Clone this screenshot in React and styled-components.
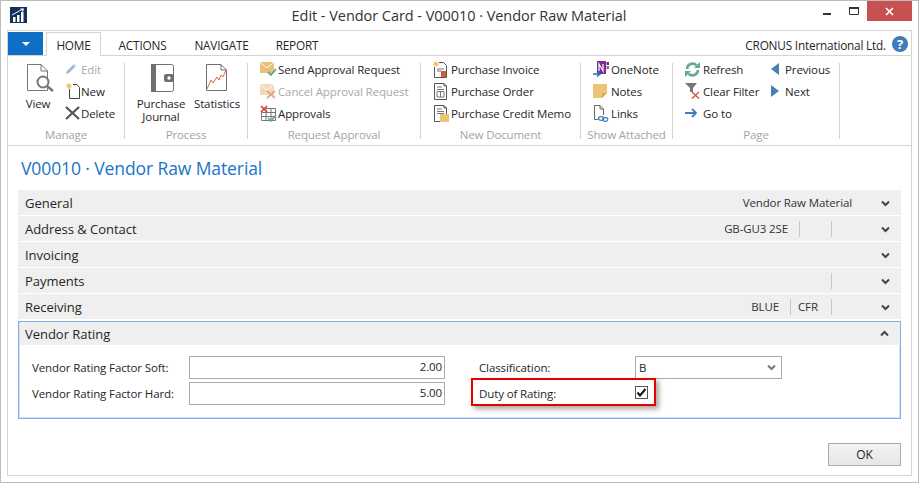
import React from 'react'
import styled, { createGlobalStyle } from 'styled-components'

const GlobalStyle = createGlobalStyle`
  html, body { margin: 0; padding: 0; background: #fff; }
  body {
    font-family: "Open Sans", "Noto Sans", sans-serif;
    font-size: 11.5px;
    letter-spacing: -0.12px;
    color: #262626;
  }
  * { box-sizing: border-box; }
`

const Win = styled.div`
  width: 919px;
  height: 483px;
  border: 1px solid #bdbdbd;
  background: #fff;
  display: flex;
  flex-direction: column;
  overflow: hidden;
`

const TitleBar = styled.div`
  height: 29px;
  flex: none;
  display: flex;
  align-items: flex-start;
`

const AppLogo = styled.svg`
  margin: 6px 0 0 9px;
  flex: none;
`

const WinTitle = styled.div`
  flex: 1;
  text-align: center;
  font-size: 14.5px;
  line-height: 30px;
  letter-spacing: -0.05px;
  padding-left: 68px;
  color: #333;
`

const WinControls = styled.div`
  display: flex;
  align-items: flex-start;
  margin-right: 6px;
`

const CtrlBtn = styled.div`
  width: ${({ $w }) => $w}px;
  height: 20px;
  display: flex;
  align-items: ${({ $low }) => ($low ? 'flex-end' : 'center')};
  justify-content: center;
  padding-bottom: ${({ $low }) => ($low ? '6px' : '0')};
  background: ${({ $close }) => ($close ? '#c75050' : 'transparent')};
`

const Frame = styled.div`
  flex: 1;
  margin: 0 6px 6px 6px;
  border: 1px solid #d4d4d4;
  display: flex;
  flex-direction: column;
  min-height: 0;
`

const TabRow = styled.div`
  height: 24px;
  flex: none;
  padding-top: 1px;
  display: flex;
  align-items: stretch;
`

const AppMenu = styled.div`
  width: 35px;
  background: #0f6fc6;
  display: flex;
  align-items: center;
  justify-content: center;
  margin-right: 3px;
`

const Caret = styled.span`
  width: 0;
  height: 0;
  border-left: 4px solid transparent;
  border-right: 4px solid transparent;
  border-top: 4px solid #fff;
`

const Tab = styled.div`
  height: ${({ $active }) => ($active ? '24px' : '23px')};
  width: ${({ $w }) => $w}px;
  display: flex;
  align-items: center;
  justify-content: center;
  padding-top: 1px;
  font-size: 11.8px;
  letter-spacing: -0.2px;
  position: relative;
  z-index: 1;
  background: #fff;
  border: 1px solid ${({ $active }) => ($active ? '#d4d4d4' : 'transparent')};
  border-bottom: none;
`

const Company = styled.div`
  margin-left: auto;
  display: flex;
  align-items: center;
  gap: 6px;
  padding: 2px 3px 0 0;
  font-size: 11.8px;
  letter-spacing: -0.2px;
`

const HelpIcon = styled.span`
  width: 16px;
  height: 16px;
  margin-top: -2px;
  border-radius: 50%;
  background: #3f7cb8;
  color: #fff;
  font-weight: 700;
  font-size: 13px;
  line-height: 16px;
  text-align: center;
`

const Ribbon = styled.div`
  height: 91px;
  flex: none;
  border-top: 1px solid #d4d4d4;
  border-bottom: 1px solid #d4d4d4;
  padding-top: 7px;
  display: flex;
  align-items: flex-start;
`

const Group = styled.div`
  width: ${({ $w }) => $w}px;
  height: 76px;
  flex: none;
  border-right: 1px solid #d4d4d4;
  display: flex;
  flex-direction: column;
  align-items: stretch;
`

const GroupBody = styled.div`
  flex: 1;
  min-height: 0;
  display: flex;
  align-items: flex-start;
  padding-left: ${({ $pad }) => $pad}px;
  gap: ${({ $gap }) => $gap || 0}px;
`

const GroupLabel = styled.div`
  height: 11px;
  line-height: 13px;
  text-align: center;
  color: #a3a3a3;
  white-space: nowrap;
`

const ItemStack = styled.div`
  display: flex;
  flex-direction: column;
  margin-top: -5px;
  width: ${({ $w }) => ($w ? `${$w}px` : 'auto')};
`

const SmallItem = styled.div`
  height: 22px;
  display: flex;
  align-items: center;
  white-space: nowrap;
  color: ${({ $off }) => ($off ? '#a9a9a9' : 'inherit')};
`

const IconSlot = styled.span`
  width: ${({ $w }) => $w}px;
  height: 18px;
  flex: none;
  display: flex;
  align-items: center;
`

const LargeItem = styled.div`
  width: ${({ $w }) => $w}px;
  flex: none;
  display: flex;
  flex-direction: column;
  align-items: center;
  text-align: center;
  line-height: 13px;
  padding-top: 1px;
`

const LargeIcon = styled.div`
  height: 28px;
  margin-bottom: 5px;
  padding-left: ${({ $nudge }) => $nudge || 0}px;
  display: flex;
  align-items: center;
`

const Content = styled.div`
  flex: 1;
  padding: 0 10px 9px 10px;
  display: flex;
  flex-direction: column;
  min-height: 0;
`

const PageTitle = styled.h1`
  margin: 0;
  height: 44px;
  font-size: 17.5px;
  font-weight: 400;
  line-height: 44px;
  letter-spacing: -0.1px;
  padding-left: 3px;
  color: #1a74c8;
`

const FastTabRow = styled.div`
  height: 25px;
  flex: none;
  margin-bottom: 1px;
  background: #efefef;
  display: flex;
  align-items: center;
  padding: 1px 0 0 7px;
  font-size: 13px;
  letter-spacing: -0.03px;
`

const FastTabName = styled.span`
  flex: 1;
`

const Summary = styled.div`
  display: flex;
  height: 100%;
  align-items: center;
  font-size: 11.5px;
  letter-spacing: -0.12px;
  color: #333;
`

const SummaryCell = styled.div`
  width: ${({ $w }) => ($w ? `${$w}px` : 'auto')};
  height: 16px;
  line-height: 15px;
  text-align: ${({ $left }) => ($left ? 'left' : 'right')};
  padding-left: ${({ $left }) => ($left ? '7px' : '0')};
  padding-right: ${({ $left, $flush }) => ($left || $flush ? '0' : '11px')};
  border-right: ${({ $div }) => ($div ? '1px solid #c8c8c8' : 'none')};
`

const ChevronSlot = styled.div`
  width: 49px;
  padding-left: 29px;
  flex: none;
  display: flex;
  align-items: center;
`

const ActivePanel = styled.div`
  margin-top: 1px;
  height: 98px;
  flex: none;
  border: 1px solid #82aeea;
  box-shadow: inset 1px 1px 0 #d3e2f8, inset -1px -1px 0 #d3e2f8;
  position: relative;
`

const PanelHeader = styled(FastTabRow)`
  height: 23px;
  margin: 0 0 0 1px;
  padding: 0 0 0 5px;
`

const FormGrid = styled.div`
  display: flex;
  padding: 11px 0 0 13px;
`

const FormCol = styled.div`
  width: ${({ $w }) => $w}px;
  flex: none;
  display: flex;
  flex-direction: column;
  gap: 3px;
`

const FieldRow = styled.div`
  height: 23px;
  display: flex;
  align-items: center;
`

const FieldLabel = styled.label`
  width: ${({ $w }) => $w}px;
  flex: none;
  white-space: nowrap;
`

const NumInput = styled.div`
  width: 256px;
  height: 23px;
  border: 1px solid #ababab;
  text-align: right;
  padding-right: 2px;
  line-height: 20px;
`

const SelectBox = styled.div`
  width: 147px;
  height: 23px;
  border: 1px solid #ababab;
  display: flex;
  align-items: center;
  justify-content: space-between;
  padding: 0 5px 0 3px;
`

const Check = styled.span`
  width: 13px;
  height: 13px;
  margin-bottom: 2px;
  border: 1px solid #555;
  background: #fff;
  display: flex;
  align-items: center;
  justify-content: center;
`

const Highlight = styled.div`
  position: absolute;
  left: 452px;
  top: 56px;
  width: 185px;
  height: 28px;
  border: 2px solid #e60000;
  box-shadow: 3px 3px 5px rgba(80, 80, 60, 0.5);
  pointer-events: none;
`

const Footer = styled.div`
  flex: 1;
  display: flex;
  align-items: flex-end;
  justify-content: flex-end;
`

const OkButton = styled.button`
  width: 73px;
  height: 23px;
  background: linear-gradient(#f3f3f3, #e6e6e6);
  border: 1px solid #adadad;
  font: inherit;
  font-size: 12px;
  color: #262626;
  padding: 0;
`

/* icons */
const PageOutline = ({ x = 0, y = 0, w, h, fold = 5, color = '#555', sw = 1 }) => (
  <path
    d={`M${x + 0.5} ${y + 0.5}H${x + w - fold}L${x + w - 0.5} ${y + fold}V${y + h - 0.5}H${x + 0.5}Z M${x + w - fold} ${y + 0.5}V${y + fold}H${x + w - 0.5}`}
    fill="none"
    stroke={color}
    strokeWidth={sw}
  />
)

const Logo = () => (
  <AppLogo width="17" height="16" viewBox="0 0 17 16">
    <rect width="17" height="16" fill="#12305c" />
    <rect x="3" y="10" width="2.5" height="5" fill="#fff" />
    <rect x="7" y="8" width="2.5" height="7" fill="#fff" />
    <rect x="11" y="5" width="2.5" height="10" fill="#fff" />
    <path d="M2 8L11 3" stroke="#fff" strokeWidth="1" fill="none" />
    <path d="M10 1.5L14 1.5L13 5Z" fill="#fff" />
  </AppLogo>
)

const ViewIcon = () => (
  <svg width="28" height="28" viewBox="0 0 28 28">
    <PageOutline w={21} h={27} fold={7} color="#777" />
    <circle cx="16" cy="18" r="5.5" fill="#fff" stroke="#777" strokeWidth="2" />
    <path d="M20 22L26 27" stroke="#777" strokeWidth="2.4" />
  </svg>
)

const JournalIcon = () => (
  <svg width="24" height="28" viewBox="0 0 24 28">
    <rect x="0.5" y="0.5" width="22" height="27" rx="2" fill="#fff" stroke="#707070" />
    <rect x="0" y="0" width="5" height="28" fill="#707070" />
    <rect x="13" y="10" width="10" height="8" rx="2" fill="#707070" />
    <circle cx="18" cy="14" r="1.7" fill="#fff" />
  </svg>
)

const StatsIcon = () => (
  <svg width="22" height="28" viewBox="0 0 22 28">
    <PageOutline w={21} h={27} fold={6} color="#707070" />
    <path d="M1 25L5 16L7 19L11 13L13 16L15 11L17 13L20 6" fill="none" stroke="#d9694a" strokeWidth="1" />
  </svg>
)

const PencilIcon = () => (
  <svg width="12" height="12" viewBox="0 0 12 12">
    <path d="M1 11L2 8L8 2L10 4L4 10Z" fill="#9db8d2" />
    <path d="M9 1L11 3L10 4L8 2Z" fill="#b9cadb" />
  </svg>
)

const NewIcon = () => (
  <svg width="15" height="16" viewBox="0 0 15 16">
    <path d="M4.5 6V15.5H14.5V4.5L12 1.5H8" fill="none" stroke="#444" />
    <path d="M4 0V6M1 3H7M2 1L6 5M6 1L2 5" stroke="#f0b94e" strokeWidth="1" />
  </svg>
)

const XIcon = () => (
  <svg width="15" height="14" viewBox="0 0 15 14">
    <path d="M1 1L14 13M14 1L1 13" stroke="#555" strokeWidth="2.2" />
  </svg>
)

const MailIcon = ({ off }) => (
  <svg width="17" height="16" viewBox="0 0 17 16" opacity={off ? 0.55 : 1}>
    <rect x="0" y="1" width="14" height="11" fill="#eabf78" />
    <path d="M0 1L7 7L14 1" fill="none" stroke="#fff" strokeWidth="1" />
    {off ? (
      <path d="M7 8L15 15M15 8L7 15" stroke="#d9573f" strokeWidth="1.8" />
    ) : (
      <path d="M8 11L11 14L16 8" fill="none" stroke="#5fa38a" strokeWidth="1.8" />
    )}
  </svg>
)

const ApprovalsIcon = () => (
  <svg width="17" height="17" viewBox="0 0 17 17">
    <path d="M6 3.5H15.5V15.5H1.5V8M1.5 11.5H15.5M6 3.5V15.5M11 3.5V15.5M1.5 7.5H15.5" fill="none" stroke="#777" />
    <path d="M1 1L7 7M7 1L1 7" stroke="#d33f2a" strokeWidth="1.7" />
    <path d="M8 13L11 16L16 10" fill="none" stroke="#5fa38a" strokeWidth="1.6" />
  </svg>
)

const InvoiceIcon = () => (
  <svg width="15" height="17" viewBox="0 0 15 17">
    <path d="M6 1.5H10.5L13.5 4.5V16.5H1.5V6" fill="none" stroke="#555" />
    <path d="M3 0V6M0 3H6M1 1L5 5M5 1L1 5" stroke="#f0b94e" />
    <path d="M4 8H11M4 10H8" stroke="#777" />
    <rect x="8" y="10" width="5" height="6" fill="#d9573f" />
  </svg>
)

const OrderIcon = () => (
  <svg width="15" height="17" viewBox="0 0 15 17">
    <PageOutline x={1} w={13} h={17} fold={3} color="#555" />
    <path d="M4 4H9M4 6.5H11M4 8.5H11V14H4ZM7.5 8.5V14" fill="none" stroke="#777" />
  </svg>
)

const MemoIcon = () => (
  <svg width="16" height="17" viewBox="0 0 16 17">
    <PageOutline x={1} w={13} h={17} fold={3} color="#555" />
    <path d="M4 4H9M4 6.5H11M4 8.5H11" stroke="#777" />
    <rect x="7" y="9" width="9" height="8" fill="#eec477" />
  </svg>
)

const OneNoteIcon = () => (
  <svg width="17" height="17" viewBox="0 0 17 17">
    <rect x="4" y="0" width="9" height="13" fill="#7b2c8f" />
    <rect x="13.5" y="1" width="2.5" height="3" fill="#7b2c8f" />
    <rect x="13.5" y="5" width="2.5" height="3" fill="#a05cb2" />
    <path d="M6 10V3L10 10V3" fill="none" stroke="#fff" strokeWidth="1.2" />
    <path d="M0 13H6M4 10.5L7 13L4 15.5" fill="none" stroke="#2f6fb3" strokeWidth="1.6" />
  </svg>
)

const NotesIcon = () => (
  <svg width="15" height="14" viewBox="0 0 15 14">
    <path d="M0 0H14V9L9 14H0Z" fill="#eec477" />
    <path d="M9 14V9H14Z" fill="#d9a95a" />
  </svg>
)

const LinksIcon = () => (
  <svg width="16" height="17" viewBox="0 0 16 17">
    <path d="M1.5 12V.5H7L10.5 4V10M7 .5V4H10.5M1.5 12V14.5H5" fill="none" stroke="#666" />
    <ellipse cx="8.2" cy="13.5" rx="2.6" ry="1.8" fill="none" stroke="#3f7cb8" strokeWidth="1.2" />
    <ellipse cx="12.2" cy="14.5" rx="2.6" ry="1.8" fill="none" stroke="#3f7cb8" strokeWidth="1.2" />
  </svg>
)

const RefreshIcon = () => (
  <svg width="15" height="15" viewBox="0 0 15 15">
    <path d="M2 7A5.5 5.5 0 0 1 11.5 3.4" fill="none" stroke="#66a892" strokeWidth="2.6" />
    <path d="M9 6H15V0Z" fill="#66a892" />
    <path d="M13 8A5.5 5.5 0 0 1 3.5 11.6" fill="none" stroke="#66a892" strokeWidth="2.6" />
    <path d="M6 9H0V15Z" fill="#66a892" />
  </svg>
)

const FilterIcon = () => (
  <svg width="16" height="16" viewBox="0 0 16 16">
    <path d="M0 0H12L8 5V9H5V5Z" fill="#777" />
    <path d="M7 9L14 15.5M14 9L7 15.5" stroke="#d9573f" strokeWidth="1.4" />
  </svg>
)

const GoToIcon = () => (
  <svg width="12" height="10" viewBox="0 0 12 10">
    <path d="M0 5H10M7 1L11 5L7 9" fill="none" stroke="#3f7cb8" strokeWidth="1.8" />
  </svg>
)

const TriangleIcon = ({ left }) => (
  <svg width="9" height="12" viewBox="0 0 9 12">
    <path d={left ? 'M8 0V12L0 6Z' : 'M0 0V12L8 6Z'} fill="#4a7fb5" />
  </svg>
)

const Chevron = ({ up, color = '#444' }) => (
  <svg width="9" height="7" viewBox="0 0 9 7">
    <path d={up ? 'M1 5.5L4.5 2L8 5.5' : 'M1 1.5L4.5 5L8 1.5'} fill="none" stroke={color} strokeWidth="2" />
  </svg>
)

const tabs = [
  { label: 'ACTIONS', w: 83 },
  { label: 'NAVIGATE', w: 75 },
  { label: 'REPORT', w: 76 },
]

const Small = ({ icon, w, off, children }) => (
  <SmallItem $off={off}>
    <IconSlot $w={w}>{icon}</IconSlot>
    {children}
  </SmallItem>
)

function App() {
  return (
    <Win>
      <GlobalStyle />
      <TitleBar>
        <Logo />
        <WinTitle>Edit - Vendor Card - V00010 · Vendor Raw Material</WinTitle>
        <WinControls>
          <CtrlBtn $w={8} $low>
            <svg width="8" height="2" viewBox="0 0 8 2"><rect width="8" height="2" fill="#333" /></svg>
          </CtrlBtn>
          <CtrlBtn $w={18} />
          <CtrlBtn $w={10}>
            <svg width="10" height="8" viewBox="0 0 10 8"><path d="M.5 1H9.5V7.5H.5Z" fill="none" stroke="#333" /><rect width="10" height="2" fill="#333" /></svg>
          </CtrlBtn>
          <CtrlBtn $w={8} />
          <CtrlBtn $w={45} $close>
            <svg width="9" height="9" viewBox="0 0 9 9"><path d="M1 1L8 8M8 1L1 8" stroke="#fff" strokeWidth="1.7" /></svg>
          </CtrlBtn>
        </WinControls>
      </TitleBar>

      <Frame>
        <TabRow>
          <AppMenu><Caret /></AppMenu>
          <Tab $active $w={55}>HOME</Tab>
          {tabs.map((t) => <Tab key={t.label} $w={t.w}>{t.label}</Tab>)}
          <Company>
            CRONUS International Ltd.
            <HelpIcon>?</HelpIcon>
          </Company>
        </TabRow>

        <Ribbon>
          <Group $w={117}>
            <GroupBody $pad={13} $gap={10}>
              <LargeItem $w={34}>
                <LargeIcon $nudge={6}><ViewIcon /></LargeIcon>
                View
              </LargeItem>
              <ItemStack>
                <Small w={16} off icon={<PencilIcon />}>Edit</Small>
                <Small w={16} icon={<NewIcon />}>New</Small>
                <Small w={16} icon={<XIcon />}>Delete</Small>
              </ItemStack>
            </GroupBody>
            <GroupLabel>Manage</GroupLabel>
          </Group>

          <Group $w={123}>
            <GroupBody $pad={11} $gap={6}>
              <LargeItem $w={50}>
                <LargeIcon $nudge={3}><JournalIcon /></LargeIcon>
                Purchase Journal
              </LargeItem>
              <LargeItem $w={50}>
                <LargeIcon><StatsIcon /></LargeIcon>
                Statistics
              </LargeItem>
            </GroupBody>
            <GroupLabel>Process</GroupLabel>
          </Group>

          <Group $w={173}>
            <GroupBody $pad={12}>
              <ItemStack>
                <Small w={18} icon={<MailIcon />}>Send Approval Request</Small>
                <Small w={18} off icon={<MailIcon off />}>Cancel Approval Request</Small>
                <Small w={18} icon={<ApprovalsIcon />}>Approvals</Small>
              </ItemStack>
            </GroupBody>
            <GroupLabel>Request Approval</GroupLabel>
          </Group>

          <Group $w={160}>
            <GroupBody $pad={12}>
              <ItemStack>
                <Small w={18} icon={<InvoiceIcon />}>Purchase Invoice</Small>
                <Small w={18} icon={<OrderIcon />}>Purchase Order</Small>
                <Small w={18} icon={<MemoIcon />}>Purchase Credit Memo</Small>
              </ItemStack>
            </GroupBody>
            <GroupLabel>New Document</GroupLabel>
          </Group>

          <Group $w={92}>
            <GroupBody $pad={12}>
              <ItemStack>
                <Small w={18} icon={<OneNoteIcon />}>OneNote</Small>
                <Small w={18} icon={<NotesIcon />}>Notes</Small>
                <Small w={18} icon={<LinksIcon />}>Links</Small>
              </ItemStack>
            </GroupBody>
            <GroupLabel>Show Attached</GroupLabel>
          </Group>

          <Group $w={167}>
            <GroupBody $pad={12}>
              <ItemStack $w={86}>
                <Small w={18} icon={<RefreshIcon />}>Refresh</Small>
                <Small w={18} icon={<FilterIcon />}>Clear Filter</Small>
                <Small w={18} icon={<GoToIcon />}>Go to</Small>
              </ItemStack>
              <ItemStack>
                <Small w={14} icon={<TriangleIcon left />}>Previous</Small>
                <Small w={14} icon={<TriangleIcon />}>Next</Small>
              </ItemStack>
            </GroupBody>
            <GroupLabel>Page</GroupLabel>
          </Group>
        </Ribbon>

        <Content>
          <PageTitle>V00010 · Vendor Raw Material</PageTitle>

          <FastTabRow>
            <FastTabName>General</FastTabName>
            <Summary><SummaryCell $flush>Vendor Raw Material</SummaryCell></Summary>
            <ChevronSlot><Chevron /></ChevronSlot>
          </FastTabRow>
          <FastTabRow>
            <FastTabName>Address &amp; Contact</FastTabName>
            <Summary>
              <SummaryCell $div>GB-GU3 2SE</SummaryCell>
              <SummaryCell $div $w={32} />
              <SummaryCell $w={20} />
            </Summary>
            <ChevronSlot><Chevron /></ChevronSlot>
          </FastTabRow>
          <FastTabRow>
            <FastTabName>Invoicing</FastTabName>
            <ChevronSlot><Chevron /></ChevronSlot>
          </FastTabRow>
          <FastTabRow>
            <FastTabName>Payments</FastTabName>
            <Summary>
              <SummaryCell $div />
              <SummaryCell $w={20} />
            </Summary>
            <ChevronSlot><Chevron /></ChevronSlot>
          </FastTabRow>
          <FastTabRow>
            <FastTabName>Receiving</FastTabName>
            <Summary>
              <SummaryCell $div>BLUE</SummaryCell>
              <SummaryCell $div $left $w={41}>CFR</SummaryCell>
              <SummaryCell $w={20} />
            </Summary>
            <ChevronSlot><Chevron /></ChevronSlot>
          </FastTabRow>

          <ActivePanel>
            <PanelHeader>
              <FastTabName>Vendor Rating</FastTabName>
              <ChevronSlot><Chevron up /></ChevronSlot>
            </PanelHeader>
            <FormGrid>
              <FormCol $w={447}>
                <FieldRow>
                  <FieldLabel $w={157}>Vendor Rating Factor Soft:</FieldLabel>
                  <NumInput>2.00</NumInput>
                </FieldRow>
                <FieldRow>
                  <FieldLabel $w={157}>Vendor Rating Factor Hard:</FieldLabel>
                  <NumInput>5.00</NumInput>
                </FieldRow>
              </FormCol>
              <FormCol $w={303}>
                <FieldRow>
                  <FieldLabel $w={156}>Classification:</FieldLabel>
                  <SelectBox>B<Chevron color="#777" /></SelectBox>
                </FieldRow>
                <FieldRow>
                  <FieldLabel $w={156}>Duty of Rating:</FieldLabel>
                  <Check>
                    <svg width="11" height="9" viewBox="0 0 11 9"><path d="M1.5 4.5L4 7.5L9.5 1" fill="none" stroke="#111" strokeWidth="2" /></svg>
                  </Check>
                </FieldRow>
              </FormCol>
            </FormGrid>
            <Highlight />
          </ActivePanel>

          <Footer>
            <OkButton>OK</OkButton>
          </Footer>
        </Content>
      </Frame>
    </Win>
  )
}

export default App
